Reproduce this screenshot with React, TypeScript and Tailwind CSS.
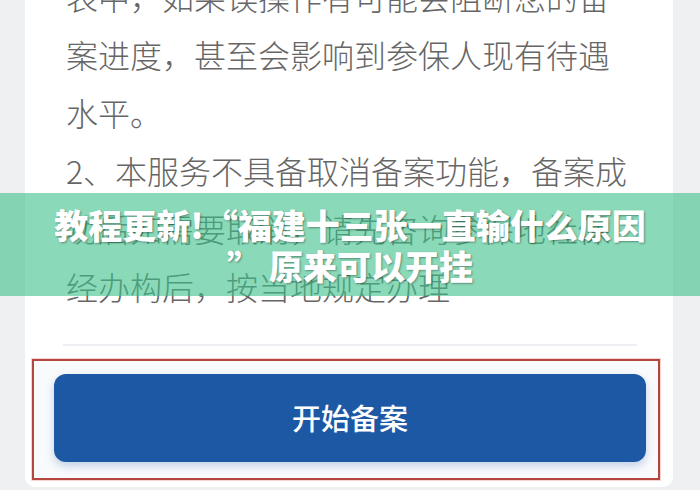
const lines = [
  "表中，如果误操作有可能会阻断您的备",
  "案进度，甚至会影响到参保人现有待遇",
  "水平。",
  "2、本服务不具备取消备案功能，备案成",
  "功后如需要取消，请先咨询参保地社保",
  "经办构后，按当地规定办理",
];

export default function App() {
  return (
    <div
      lang="zh-CN"
      className="relative h-[490px] w-[700px] overflow-hidden bg-[#eff0f2] font-['Noto_Sans_CJK_SC','Noto_Sans',sans-serif]"
    >
      {/* notice card */}
      <div className="ml-[25px] w-[648px] rounded-b-[10px] bg-white pb-[7px]">
        <div className="-mt-[33px] pl-[41px] text-[32px] font-light leading-[58px] text-[#666666]">
          {lines.map((line) => (
            <p key={line} className="whitespace-nowrap">
              {line}
            </p>
          ))}
        </div>

        <div className="mt-[29px] ml-[38px] mr-[36px] h-[2px] bg-[#eeeff2]" />

        {/* action area */}
        <div className="mt-[13px] ml-[7px] mr-[13px] border-2 border-[#b3463e] bg-[#f9fafc] pt-[13px] pb-[16px] pl-[20px] pr-[12px] shadow-[0_0_0_1px_rgba(232,160,150,0.45)]">
          <button className="flex h-[88px] w-full items-center justify-center rounded-[12px] bg-[#1d58a4] text-[29px] font-medium text-white shadow-[0_4px_8px_rgba(29,88,164,0.25)]">
            开始备案
          </button>
        </div>
      </div>

      {/* headline banner */}
      <div className="absolute left-0 right-0 top-[193px] flex h-[103px] flex-col items-center justify-center bg-[#3cbf88]/60 text-[34px] font-black leading-[41px] text-white [text-shadow:1px_1px_2px_rgba(0,0,0,0.35)]">
        <p className="whitespace-nowrap">教程更新!“福建十三张一直输什么原因</p>
        <p className="whitespace-nowrap">” 原来可以开挂</p>
      </div>
    </div>
  );
}
